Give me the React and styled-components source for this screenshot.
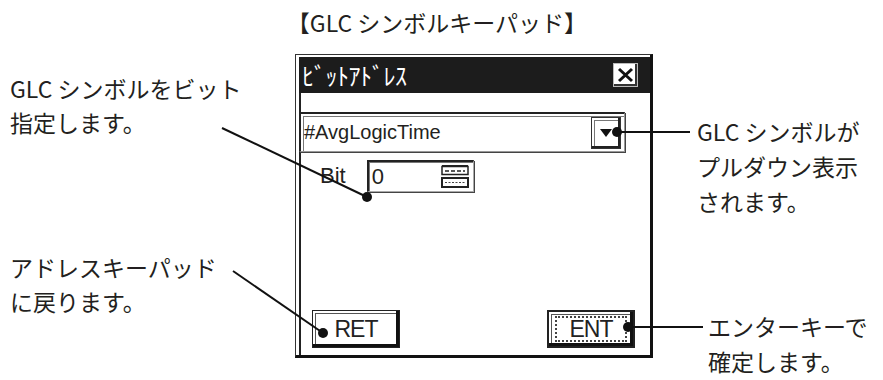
import React from "react";
import styled, { createGlobalStyle } from "styled-components";

const JP = `"Noto Sans CJK JP", "Noto Sans", sans-serif`;
const UI = `"Liberation Sans", Arial, sans-serif`;

const GlobalStyle = createGlobalStyle`
  html, body {
    margin: 0;
    padding: 0;
    background: #fff;
  }
`;

// leader lines: start at the note, end with a dot on the control
const leaders = [
    { x1: 222, y1: 128, x2: 367, y2: 197 },
    { x1: 233, y1: 271, x2: 323, y2: 333 },
    { x1: 690, y1: 132, x2: 617, y2: 132 },
    { x1: 703, y1: 327, x2: 628, y2: 327 },
];

const App = () => {
    return (
        <Figure>
            <GlobalStyle />
            <Heading>【GLC シンボルキーパッド】</Heading>
            <Stage>
                <Notes>
                    <Note $top={17} $indent={10}>
                        GLC シンボルをビット
                        <br />
                        指定します。
                    </Note>
                    <Note $top={111} $indent={10}>
                        アドレスキーパッド
                        <br />
                        に戻ります。
                    </Note>
                </Notes>

                <Window>
                    <TitleBar>
                        <TitleText>ﾋﾞｯﾄｱﾄﾞﾚｽ</TitleText>
                        <CloseBox>
                            <svg width="17" height="16" viewBox="0 0 17 16">
                                <path d="M2 2 L15 14 M15 2 L2 14" stroke="#111" strokeWidth="3" />
                            </svg>
                        </CloseBox>
                    </TitleBar>
                    <Body>
                        <Combo>
                            <ComboText>#AvgLogicTime</ComboText>
                            <DropButton>
                                <svg width="14" height="10" viewBox="0 0 14 10">
                                    <polygon points="1,1 13,1 7,9" fill="#111" />
                                </svg>
                            </DropButton>
                        </Combo>
                        <FieldRow>
                            <FieldLabel>Bit</FieldLabel>
                            <Field>
                                <span>0</span>
                                <Spinner />
                            </Field>
                        </FieldRow>
                        <ButtonRow>
                            <KeyButton>
                                <span>RET</span>
                            </KeyButton>
                            <KeyButton $isDefault>
                                <FocusRing>ENT</FocusRing>
                            </KeyButton>
                        </ButtonRow>
                    </Body>
                </Window>

                <Notes>
                    <Note $top={60} $indent={44} $lh={35}>
                        GLC シンボルが
                        <br />
                        プルダウン表示
                        <br />
                        されます。
                    </Note>
                    <Note $top={90} $indent={55} $lh={35}>
                        エンターキーで
                        <br />
                        確定します。
                    </Note>
                </Notes>
            </Stage>

            <Leaders viewBox="0 0 883 380">
                {leaders.map((l, i) => (
                    <g key={i}>
                        <line x1={l.x1} y1={l.y1} x2={l.x2} y2={l.y2} stroke="#111" strokeWidth="2" />
                        <circle cx={l.x2} cy={l.y2} r="5" fill="#111" />
                    </g>
                ))}
            </Leaders>
        </Figure>
    );
};

const Spinner = () => (
    <svg width="28" height="24" viewBox="0 0 28 24">
        <rect x="1" y="1.5" width="26" height="8" fill="#fff" stroke="#222" strokeWidth="1.5" />
        <line x1="1" y1="1" x2="27" y2="1" stroke="#222" strokeWidth="2" />
        <line x1="4" y1="6" x2="24" y2="6" stroke="#222" strokeWidth="1.5" strokeDasharray="4 2" />
        <rect x="1" y="13" width="26" height="9" fill="#fff" stroke="#222" strokeWidth="2" />
        <line x1="4" y1="17.5" x2="24" y2="17.5" stroke="#444" strokeWidth="1.2" strokeDasharray="2 1.5" />
    </svg>
);

export default App;

const Figure = styled.div`
    position: relative;
    width: 883px;
    height: 380px;
    overflow: hidden;
    color: #231f20;
    font-family: ${JP};
`;

const Heading = styled.div`
    height: 54px;
    line-height: 44px;
    padding-right: 9px;
    text-align: center;
    font-size: 23px;
`;

const Stage = styled.div`
    display: grid;
    grid-template-columns: 295px 358px 1fr;
    height: 326px;
`;

const Notes = styled.div`
    display: flex;
    flex-direction: column;
`;

const Note = styled.p`
    margin: ${({ $top }) => $top}px 0 0;
    padding-left: ${({ $indent }) => $indent}px;
    font-size: 23px;
    line-height: ${({ $lh }) => $lh || 34}px;
    white-space: nowrap;
`;

const Window = styled.div`
    box-sizing: border-box;
    width: 358px;
    height: 304px;
    display: flex;
    flex-direction: column;
    border-style: solid;
    border-width: 1px 3px 3px 1px;
    border-color: #333 #111 #111 #333;
    padding: 2px 0 0 3px;
    background: #fff;
`;

const TitleBar = styled.div`
    height: 36px;
    flex-shrink: 0;
    display: flex;
    align-items: center;
    justify-content: space-between;
    padding: 0 12px 0 3px;
    background: #1c1c1c;
`;

const TitleText = styled.span`
    color: #fff;
    font-family: ${JP};
    font-size: 24px;
    letter-spacing: -0.5px;
    line-height: 1;
`;

const CloseBox = styled.div`
    box-sizing: border-box;
    width: 25px;
    height: 24px;
    display: flex;
    align-items: center;
    justify-content: center;
    background: #fff;
    border: 1px solid #bbb;
    box-shadow: inset -2px -2px 0 #333;
`;

const Body = styled.div`
    flex: 1;
    display: flex;
    flex-direction: column;
    border-left: 2px solid #222;
    padding-top: 19px;
`;

const Combo = styled.div`
    box-sizing: border-box;
    width: 326px;
    height: 40px;
    margin-left: -2px;
    display: flex;
    align-items: center;
    border-style: solid;
    border-width: 2px 1px 1px 2px;
    border-color: #222 #999 #999 #222;
    box-shadow: inset 2px 2px 0 #fff, inset 3px 3px 0 #777, 1px 1px 0 #444;
    padding: 0 3px 0 3px;
`;

const ComboText = styled.span`
    flex: 1;
    font-family: ${UI};
    font-size: 20px;
`;

const DropButton = styled.div`
    box-sizing: border-box;
    width: 30px;
    height: 32px;
    display: flex;
    align-items: center;
    justify-content: center;
    border: 1px solid #333;
    box-shadow: inset -2px -2px 0 #222, inset 2px 2px 0 #fff, inset 3px 3px 0 #777;
`;

const FieldRow = styled.div`
    display: flex;
    align-items: center;
    gap: 21px;
    margin-top: 8px;
    padding-left: 19px;
`;

const FieldLabel = styled.span`
    font-family: ${UI};
    font-size: 22px;
`;

const Field = styled.div`
    box-sizing: border-box;
    width: 107px;
    height: 32px;
    display: flex;
    align-items: center;
    justify-content: space-between;
    border-style: solid;
    border-width: 2px 1px 1px 2px;
    border-color: #222 #aaa #aaa #222;
    box-shadow: inset 1px 1px 0 #777, 1px 1px 0 #444;
    padding: 0 4px 0 3px;
    font-family: ${UI};
    font-size: 22px;

    svg { display: block; }
`;

const ButtonRow = styled.div`
    margin-top: auto;
    display: flex;
    justify-content: space-between;
    padding: 0 15px 7px 11px;
`;

const KeyButton = styled.div`
    box-sizing: border-box;
    width: 88px;
    height: 38px;
    display: flex;
    align-items: center;
    justify-content: center;
    border: ${({ $isDefault }) => ($isDefault ? "2px" : "1px")} solid #222;
    box-shadow: inset -3px -3px 0 #111, inset 2px 2px 0 #fff, inset 3px 3px 0 #555;
    font-family: ${UI};
    font-size: 23px;
    letter-spacing: -1px;
    color: #222;
`;

const FocusRing = styled.span`
    box-sizing: border-box;
    width: 72px;
    height: 26px;
    display: flex;
    align-items: center;
    justify-content: center;
    border: 2px dotted #444;
`;

const Leaders = styled.svg`
    position: absolute;
    left: 0;
    top: 0;
    width: 883px;
    height: 380px;
    pointer-events: none;
`;
